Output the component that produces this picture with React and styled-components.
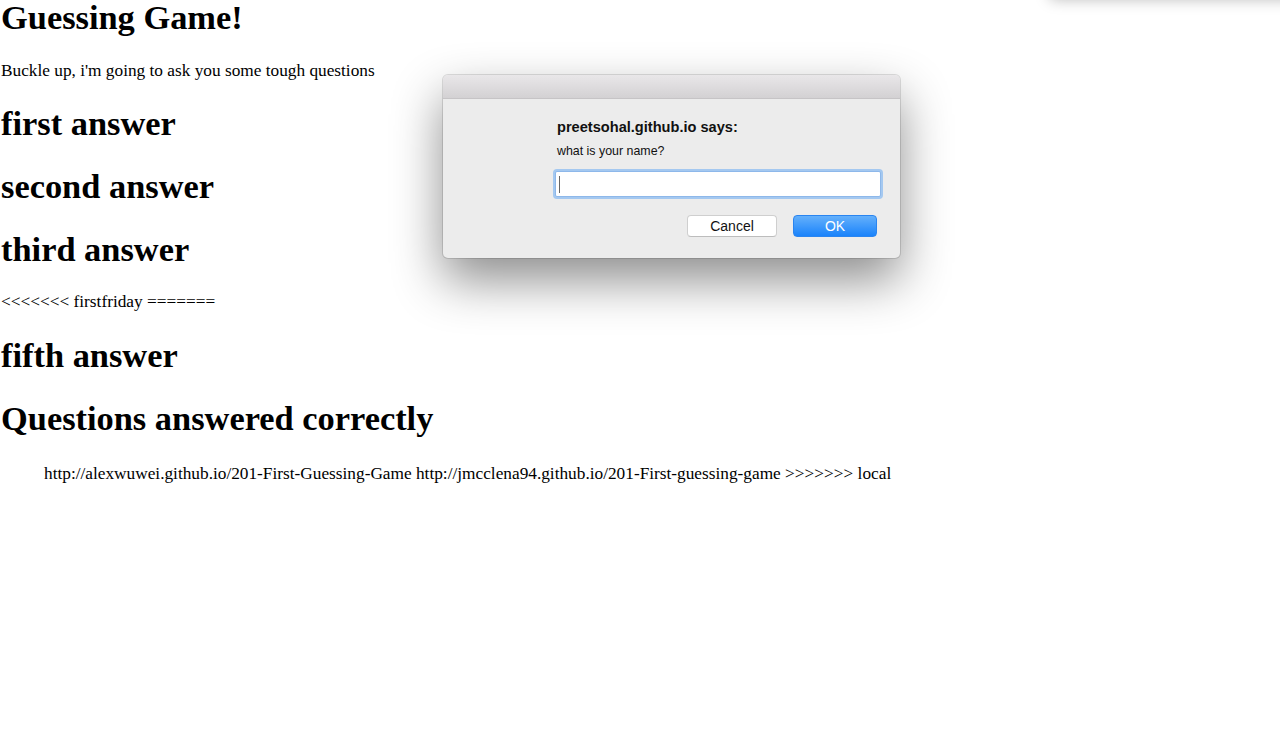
import React from "react";
import styled, { createGlobalStyle } from "styled-components";

const Global = createGlobalStyle`
  html, body { margin: 0; padding: 0; background: #fff; }
  body {
    font-family: "Liberation Serif", "Times New Roman", serif;
    font-size: 17.3px;
    color: #000;
  }
`;

const Page = styled.div`
  position: relative;
  min-height: 738px;
  padding-top: 1px;
  margin-top: -3px;
`;

const Heading = styled.h1`
  font-size: 34.4px;
  font-weight: bold;
  margin: ${(p) => (p.$first ? "0" : "23.7px")} 0 23.7px 0;
  padding-left: 1px;
`;

const Para = styled.p`
  margin: 17.3px 0;
  padding-left: 1px;
`;

const Loose = styled.div`
  padding-left: 1px;
`;

const Links = styled.div`
  margin: 26px 0 17.3px 44px;
`;

const TopShadow = styled.div`
  position: absolute;
  top: -60px;
  left: 1050px;
  width: 260px;
  height: 58px;
  background: #fff;
  box-shadow: 0 4px 14px rgba(0, 0, 0, 0.28);
`;

const Dialog = styled.div`
  position: absolute;
  left: 443px;
  top: 78px;
  width: 457px;
  height: 183px;
  background: #ececec;
  border-radius: 5px;
  box-shadow: 0 22px 50px rgba(0, 0, 0, 0.45), 0 0 0 1px rgba(0, 0, 0, 0.12);
  overflow: hidden;
  display: flex;
  flex-direction: column;
  font-family: "Liberation Sans", Arial, sans-serif;
`;

const TitleBar = styled.div`
  height: 23px;
  background: linear-gradient(#e9e7e9, #d3d1d3);
  border-bottom: 1px solid #c6c4c6;
`;

const Body = styled.div`
  flex: 1;
  padding: 20px 18px 0 111px;
  display: flex;
  flex-direction: column;
`;

const Title = styled.div`
  font-size: 14.6px;
  font-weight: bold;
  color: #111;
  padding-left: 3px;
  line-height: 16px;
`;

const Message = styled.div`
  font-size: 12.4px;
  color: #111;
  padding-left: 3px;
  margin-top: 9px;
  line-height: 14px;
`;

const Field = styled.div`
  margin-top: 13px;
  height: 24px;
  background: #fff;
  border: 1px solid #8eb8ea;
  box-shadow: 0 0 0 2px #a4c8f0;
  border-radius: 2px;
  margin-left: 1px;
  margin-right: 1px;
  display: flex;
  align-items: center;
  padding-left: 3px;
`;

const Caret = styled.span`
  width: 1px;
  height: 17px;
  background: #666;
`;

const Buttons = styled.div`
  margin-top: 18px;
  display: flex;
  justify-content: flex-end;
  gap: 16px;
  padding-right: 5px;
`;

const Button = styled.button`
  width: ${(p) => p.$w}px;
  height: 22px;
  padding: 0;
  border-radius: 4px;
  font-family: "Liberation Sans", Arial, sans-serif;
  font-size: 14px;
  line-height: 20px;
  cursor: default;
  ${(p) =>
    p.$primary
      ? `
    color: #fff;
    background: linear-gradient(#64b0fb, #1a83fb);
    border: 1px solid #2a85f0;
  `
      : `
    color: #111;
    background: #fff;
    border: 1px solid #cfcfcf;
    border-bottom-color: #bdbdbd;
  `}
`;

export default function App() {
  return (
    <>
      <Global />
      <Page>
        <Heading $first>Guessing Game!</Heading>
        <Para>Buckle up, i'm going to ask you some tough questions</Para>
        <Heading>first answer</Heading>
        <Heading>second answer</Heading>
        <Heading>third answer</Heading>
        <Loose>&lt;&lt;&lt;&lt;&lt;&lt;&lt; firstfriday =======</Loose>
        <Heading>fifth answer</Heading>
        <Heading>Questions answered correctly</Heading>
        <Links>
          http://alexwuwei.github.io/201-First-Guessing-Game
          http://jmcclena94.github.io/201-First-guessing-game &gt;&gt;&gt;&gt;&gt;&gt;&gt; local
        </Links>
        <TopShadow />
        <Dialog>
          <TitleBar />
          <Body>
            <Title>preetsohal.github.io says:</Title>
            <Message>what is your name?</Message>
            <Field>
              <Caret />
            </Field>
            <Buttons>
              <Button $w={90}>Cancel</Button>
              <Button $w={84} $primary>
                OK
              </Button>
            </Buttons>
          </Body>
        </Dialog>
      </Page>
    </>
  );
}
